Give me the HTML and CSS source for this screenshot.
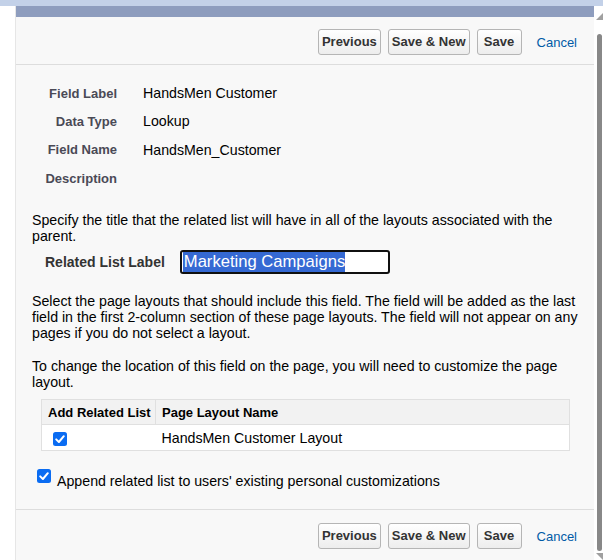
FILE: index.html
```html
<!DOCTYPE html>
<html lang="en">
<head>
<meta charset="utf-8">
<title>New Custom Field - Step 4</title>
<link rel="stylesheet" href="styles.css">
</head>
<body>
<div class="topband"></div>
<div class="frame">
  <div class="gutter"></div>
  <div class="panel">
    <div class="panel-head"></div>
    <div class="btnbar btnbar-top">
      <button class="btn" type="button">Previous</button>
      <button class="btn" type="button">Save &amp; New</button>
      <button class="btn" type="button">Save</button>
      <a class="cancel" href="#">Cancel</a>
    </div>
    <div class="content">
      <div class="fields">
        <div class="lbl">Field Label</div><div class="val">HandsMen Customer</div>
        <div class="lbl">Data Type</div><div class="val">Lookup</div>
        <div class="lbl">Field Name</div><div class="val">HandsMen_Customer</div>
        <div class="lbl">Description</div><div class="val"></div>
      </div>
      <p class="para p1">Specify the title that the related list will have in all of the layouts associated with the parent.</p>
      <div class="rl-row">
        <span class="rl-label">Related List Label</span>
        <div class="textbox"><span class="sel">Marketing Campaigns</span></div>
      </div>
      <p class="para p2">Select the page layouts that should include this field. The field will be added as the last field in the first 2-column section of these page layouts. The field will not appear on any pages if you do not select a layout.</p>
      <p class="para p3">To change the location of this field on the page, you will need to customize the page layout.</p>
      <table class="layouts">
        <thead>
          <tr><th class="col-add">Add Related List</th><th class="col-name">Page Layout Name</th></tr>
        </thead>
        <tbody>
          <tr>
            <td class="col-add">
              <span class="cb cb-row"><svg width="14" height="14" viewBox="0 0 14 14"><rect x="0" y="0" width="14" height="14" rx="2.5" fill="#0a6cf2"/><path d="M3.2 7.4 L5.9 10 L10.8 4.2" fill="none" stroke="#fff" stroke-width="2" stroke-linecap="round" stroke-linejoin="round"/></svg></span>
            </td>
            <td class="col-name">HandsMen Customer Layout</td>
          </tr>
        </tbody>
      </table>
      <div class="append">
        <span class="cb"><svg width="14" height="14" viewBox="0 0 14 14"><rect x="0" y="0" width="14" height="14" rx="2.5" fill="#0a6cf2"/><path d="M3.2 7.4 L5.9 10 L10.8 4.2" fill="none" stroke="#fff" stroke-width="2" stroke-linecap="round" stroke-linejoin="round"/></svg></span>
        <span class="append-text">Append related list to users' existing personal customizations</span>
      </div>
    </div>
    <div class="btnbar btnbar-bottom">
      <button class="btn" type="button">Previous</button>
      <button class="btn" type="button">Save &amp; New</button>
      <button class="btn" type="button">Save</button>
      <a class="cancel" href="#">Cancel</a>
    </div>
  </div>
  <div class="scrollbar">
    <svg class="arrow" width="7" height="7" viewBox="0 0 7 7"><path d="M0 7 L7 0 L7 7 Z" fill="#a0a0a0"/></svg>
    <div class="thumb"></div>
    <svg class="arrow" width="7" height="7" viewBox="0 0 7 7"><path d="M0 0 L7 0 L7 7 Z" fill="#a0a0a0"/></svg>
  </div>
</div>
</body>
</html>
```

FILE: styles.css
```css
* { box-sizing: border-box; }

html, body {
  margin: 0;
  padding: 0;
  height: 560px;
  overflow: hidden;
  background: #ffffff;
  font-family: "Liberation Sans", Arial, sans-serif;
  color: #000;
}

.topband {
  height: 6px;
  background: #c3d1e8;
}

.frame {
  display: flex;
  height: 554px;
}

.gutter {
  width: 16px;
  flex: none;
  background: #ffffff;
  border-right: 1px solid #e6e6e6;
}

.panel {
  flex: 1;
  background: #f8f8f8;
  display: flex;
  flex-direction: column;
  min-width: 0;
}

.panel-head {
  height: 11px;
  background: #8e9dbe;
  flex: none;
}

.btnbar {
  display: flex;
  justify-content: flex-end;
  align-items: center;
  gap: 7px;
  padding-right: 17px;
  flex: none;
}

.btnbar-top {
  padding-top: 12px;
  padding-bottom: 9px;
  border-bottom: 1px solid #dddddd;
}

.btnbar-bottom {
  padding-top: 13px;
  border-top: 1px solid #dddddd;
}

.btn {
  height: 26px;
  min-width: 45px;
  padding: 0 3px;
  border: 1px solid #b5b5b5;
  border-radius: 3px;
  background: linear-gradient(#ffffff, #ededed);
  font-family: "Liberation Sans", Arial, sans-serif;
  font-size: 13px;
  font-weight: bold;
  color: #333333;
  line-height: 24px;
}

.cancel {
  margin-left: 8px;
  font-size: 13px;
  color: #015ba7;
  text-decoration: none;
}

.content {
  padding: 14px 12px 20px 16px;
}

.fields {
  display: grid;
  grid-template-columns: 85px 1fr;
  grid-auto-rows: 28.3px;
  column-gap: 26px;
  align-items: center;
}

.lbl {
  text-align: right;
  font-size: 13px;
  font-weight: bold;
  color: #4a4a56;
}

.val {
  font-size: 14.2px;
  color: #000;
}

.para {
  margin: 0;
  font-size: 14.2px;
  line-height: 16px;
  color: #000;
}

.p1 { margin-top: 20px; }
.p2 { margin-top: 19px; }
.p3 { margin-top: 17px; }

.rl-row {
  display: flex;
  align-items: center;
  margin-top: 6px;
  padding-left: 13px;
  gap: 15px;
}

.rl-label {
  font-size: 14px;
  font-weight: bold;
  color: #333333;
}

.textbox {
  width: 210px;
  height: 24px;
  border: 2px solid #101010;
  border-radius: 3px;
  background: #ffffff;
  padding: 0 0 0 1px;
  display: flex;
  align-items: center;
}

.sel {
  background: #3569d3;
  color: #ffffff;
  font-size: 16.6px;
  line-height: 20px;
  padding-left: 1px;
  white-space: nowrap;
}

.layouts {
  margin-top: 9px;
  margin-left: 9px;
  width: 529px;
  border-collapse: collapse;
  border: 1px solid #e0e0e0;
}

.layouts th {
  height: 25px;
  background: #f2f2f2;
  font-size: 13px;
  font-weight: bold;
  text-align: left;
  color: #000;
  padding: 0 0 0 6px;
  border-bottom: 1px solid #e0e0e0;
}

.layouts th.col-add {
  width: 114px;
  border-right: 1px solid #e0e0e0;
}

.layouts td {
  height: 26px;
  background: #ffffff;
  font-size: 14.2px;
  padding: 0 0 0 6px;
  vertical-align: middle;
}

.layouts td.col-add {
  padding-left: 11px;
}

.cb {
  display: inline-flex;
  width: 14px;
  height: 14px;
  flex: none;
}

.cb-row {
  vertical-align: middle;
  margin-top: 1px;
}

.append {
  display: flex;
  align-items: flex-start;
  margin-top: 18px;
  padding-left: 5px;
  gap: 6px;
}

.append-text {
  font-size: 14.2px;
  line-height: 16px;
  margin-top: 4px;
}

.scrollbar {
  width: 9px;
  flex: none;
  background: #ffffff;
  display: flex;
  flex-direction: column;
  align-items: flex-end;
  padding-left: 3px;
}

.arrow {
  display: block;
  flex: none;
}

.scrollbar .arrow:first-child {
  margin-top: 7px;
}

.thumb {
  width: 5px;
  flex: 1;
  align-self: flex-start;
  margin: 14px 0 2px 0;
  background: #888888;
  border-radius: 3px;
}
```
